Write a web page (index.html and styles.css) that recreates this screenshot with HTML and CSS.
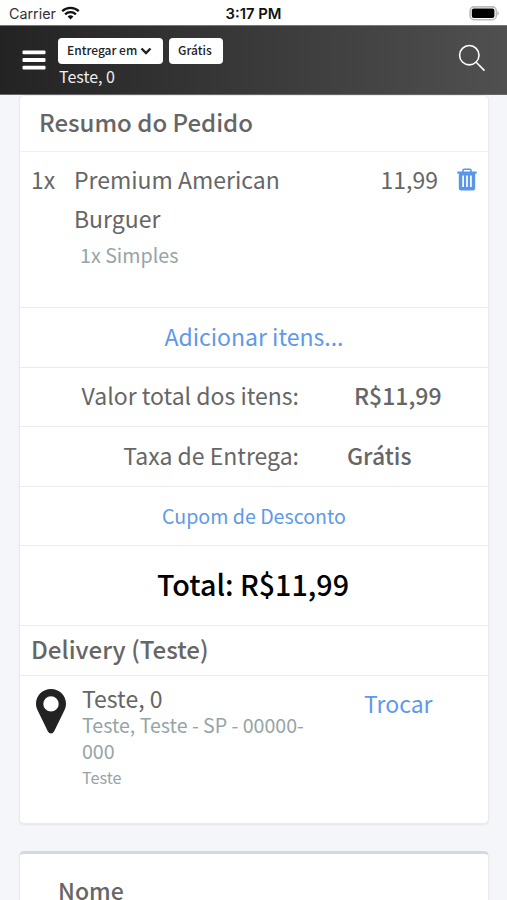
FILE: index.html
```html
<!DOCTYPE html>
<html lang="pt-BR">
<head>
<meta charset="utf-8">
<meta name="viewport" content="width=device-width, initial-scale=1">
<title>Resumo do Pedido</title>
<link rel="stylesheet" href="styles.css">
</head>
<body>
<div class="status">
  <div class="carrier"><span>Carrier</span>
    <svg width="19" height="14" viewBox="0 0 19 14"><g fill="none" stroke="#111" stroke-width="2.3"><path d="M1.2 5.2A12 12 0 0 1 17.8 5.2"/><path d="M4.1 8.3A7.8 7.8 0 0 1 14.9 8.3"/></g><path d="M6.6 10.6A4.2 4.2 0 0 1 12.4 10.6L9.5 13.6Z" fill="#111"/></svg>
  </div>
  <div class="time">3:17 PM</div>
  <div class="battery"><svg width="31" height="15" viewBox="0 0 31 15"><rect x="1.1" y=".9" width="26.2" height="12.8" rx="4" fill="#fff" stroke="#bbb" stroke-width="1.6"/><rect x="2.8" y="2.6" width="22.6" height="9.4" rx="2" fill="#000"/><path d="M28.5 4.8Q31 7.3 28.5 9.8Z" fill="#aaa"/></svg></div>
</div>
<header class="topbar">
  <svg class="menu" width="24" height="20" viewBox="0 0 24 20" fill="#fff"><rect x=".5" y=".5" width="23" height="3.8" rx="1"/><rect x=".5" y="8.1" width="23" height="3.8" rx="1"/><rect x=".5" y="15.7" width="23" height="3.8" rx="1"/></svg>
  <div class="place">
    <div class="chips">
      <span class="chip chip-main">Entregar em <svg width="12" height="8" viewBox="0 0 12 8"><path d="M1.5 1.5L6 6L10.5 1.5" fill="none" stroke="#222" stroke-width="2.4"/></svg></span>
      <span class="chip">Grátis</span>
    </div>
    <div class="address">Teste, 0</div>
  </div>
  <svg class="search" width="28" height="28" viewBox="0 0 28 28" fill="none" stroke="#fff" stroke-width="1.6"><circle cx="11.3" cy="11.2" r="9.7"/><path d="M18.2 18.2L26.5 26.6"/></svg>
</header>
<main>
  <section class="card order">
    <h2 class="title"><span>Resumo do Pedido</span></h2>
    <div class="item">
      <span class="qty">1x</span>
      <div class="product">
        <div class="name">Premium American Burguer</div>
        <div class="option">1x Simples</div>
      </div>
      <span class="price">11,99</span>
      <svg class="trash" width="20" height="23" viewBox="0 0 20 23"><path d="M6 4V2.3Q6 1.2 7.1 1.2H12.9Q14 1.2 14 2.3V4" fill="none" stroke="#5796e8" stroke-width="1.6"/><path d="M.3 3.5H19.7V5.6H.3Z" fill="#5796e8"/><path d="M1.8 5H18.2V20Q18.2 22.5 15.7 22.5H4.3Q1.8 22.5 1.8 20Z" fill="#5796e8"/><path d="M6.1 7.5V19M10 7.5V19M13.9 7.5V19" stroke="#fff" stroke-width="1.7"/></svg>
    </div>
    <div class="row center"><a class="link add">Adicionar itens...</a></div>
    <div class="row sum"><span class="label">Valor total dos itens:</span><b class="amount">R$11,99</b></div>
    <div class="row fee"><span class="label">Taxa de Entrega:</span><b class="amount free">Grátis</b></div>
    <div class="row center coupon"><a class="link small">Cupom de Desconto</a></div>
    <div class="row center total"><b>Total: R$11,99</b></div>
    <h3 class="row delivery">Delivery (Teste)</h3>
    <div class="destination">
      <svg class="pin" width="30" height="45" viewBox="0 0 30 45"><path fill="#222" fill-rule="evenodd" d="M15 0C6.5 0 0 6.5 0 14.8C0 18 1 20 2.2 22.6L11.8 42.3Q13 44.6 15 44.6T18.2 42.3L27.8 22.6C29 20 30 18 30 14.8C30 6.5 23.5 0 15 0ZM15 7.2A7.7 7.7 0 1 1 15 22.6A7.7 7.7 0 1 1 15 7.2Z"/></svg>
      <div class="where">
        <div class="street">Teste, 0</div>
        <div class="city">Teste, Teste - SP - 00000-<br>000</div>
        <div class="note">Teste</div>
      </div>
      <a class="link change">Trocar</a>
    </div>
  </section>
  <section class="card form"><label class="field">Nome</label></section>
</main>
</body>
</html>
```

FILE: styles.css
```css
* { box-sizing: border-box; }
body { margin: 0; height: 900px; overflow: hidden; background: #f4f6fa; color: #666; font-family: "Noto Sans CJK JP", "Noto Sans", sans-serif; font-size: 23px; }
svg { display: block; flex: none; }
b, h2, h3 { font-weight: 500; }
.status { height: 25px; background: #fff; display: grid; grid-template-columns: 1fr auto 1fr; align-items: center; padding: 2px 7px 0 9px; font-family: Inter, sans-serif; font-size: 14.3px; line-height: 22px; color: #333; }
.carrier { display: flex; gap: 5px; align-items: center; }
.carrier svg { margin-bottom: 2px; }
.time { font-weight: 600; color: #111; font-size: 14.8px; margin-right: 2px; }
.battery { justify-self: end; }
.topbar { height: 70px; display: flex; background: linear-gradient(90deg, #232323, #505050); border-top: 1px solid #777; border-bottom: 1px solid #666; padding: 12px 21px 0 22px; }
.menu { margin-top: 12px; }
.place { margin-left: 12px; flex: 1; }
.chips { display: flex; gap: 6px; }
.chip { height: 26px; background: #fff; border-radius: 4px; padding: 0 9px; font-size: 12px; line-height: 23px; font-weight: 500; color: #222; width: 54px; white-space: nowrap; }
.chip-main { width: 105px; display: flex; gap: 3px; }
.chip-main svg { margin-top: 9px; }
.address { color: #eee; font-size: 16px; line-height: 22px; padding-left: 1px; margin-top: 1px; }
.search { margin-top: 6px; }
main { padding: 0 18px 0 19px; }
.card { background: #fff; border: 1px solid #e9ebee; border-radius: 5px; box-shadow: 0 1px 2px #0001; }
.order { height: 729px; }
.title { margin: 0; height: 55.5px; line-height: 51px; padding-left: 19px; font-size: 24px; border-bottom: 1px solid #f0f0f0; }
.item { height: 155.5px; display: flex; padding: 8px 11px 0; line-height: 39px; }
.qty { width: 43px; }
.product { width: 230px; }
.option { color: #95a5a6; font-size: 19.7px; line-height: 34px; padding-left: 6px; }
.price { margin-left: auto; }
.trash { margin: 8px 0 0 19px; }
.row { height: 59.5px; border-top: 1px solid #ebebeb; display: flex; align-items: center; line-height: 40px; margin: 0; padding-bottom: 3px; }
.center { justify-content: center; }
.link { color: #6099e8; }
.small { font-size: 19.6px; }
.label { width: 279px; text-align: right; white-space: nowrap; }
.amount { margin-left: 55px; }
.free { margin-left: 48px; }
.coupon { padding-bottom: 0; }
.total { height: 80px; font-size: 28.7px; color: #000; padding-right: 2px; padding-bottom: 3px; }
.delivery { height: 49.5px; padding-left: 11px; padding-bottom: 3px; font-size: 24.1px; }
.destination { border-top: 1px solid #ebebeb; display: flex; padding: 8px 15px 0 16px; }
.pin { margin-top: 5px; }
.where { width: 267px; margin-left: 16px; }
.street { line-height: 28px; }
.city { font-size: 19.6px; line-height: 26px; color: #95a5a6; }
.note { font-size: 16.2px; line-height: 26px; color: #95a5a6; }
.change { margin-left: 15px; line-height: 38px; }
.form { margin-top: 27px; height: 49px; border-top: 3px solid #d0dbe3; border-bottom: 0; border-radius: 5px 5px 0 0; padding: 17px 38px 0; }
.field { display: block; font-weight: 500; line-height: 38px; }
```
